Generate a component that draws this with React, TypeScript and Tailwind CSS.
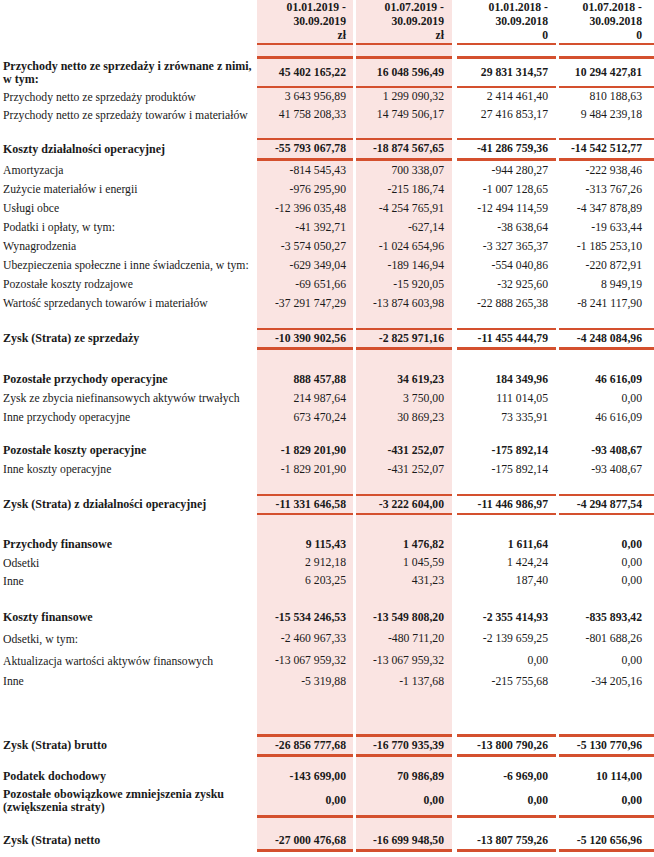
import React from "react";

type Row = {
  label?: string;
  values?: string[];
  bold?: boolean;
  h: string;
  bt?: string;
  bb?: string;
};

const rows: Row[] = [
  { h: "h-[11px]" },
  {
    label: "Przychody netto ze sprzedaży i zrównane z nimi,\nw tym:",
    values: ["45 402 165,22", "16 048 596,49", "29 831 314,57", "10 294 427,81"],
    bold: true,
    h: "h-[32px]",
    bt: "border-t-[3px]",
    bb: "border-b-2",
  },
  { label: "Przychody netto ze sprzedaży produktów", values: ["3 643 956,89", "1 299 090,32", "2 414 461,40", "810 188,63"], h: "h-[18px]" },
  { label: "Przychody netto ze sprzedaży towarów i materiałów", values: ["41 758 208,33", "14 749 506,17", "27 416 853,17", "9 484 239,18"], h: "h-[18px]" },
  { h: "h-[14px]" },
  {
    label: "Koszty działalności operacyjnej",
    values: ["-55 793 067,78", "-18 874 567,65", "-41 286 759,36", "-14 542 512,77"],
    bold: true,
    h: "h-[23px]",
    bt: "border-t-2",
    bb: "border-b-[3px]",
  },
  { label: "Amortyzacja", values: ["-814 545,43", "700 338,07", "-944 280,27", "-222 938,46"], h: "h-[19px]" },
  { label: "Zużycie materiałów i energii", values: ["-976 295,90", "-215 186,74", "-1 007 128,65", "-313 767,26"], h: "h-[19px]" },
  { label: "Usługi obce", values: ["-12 396 035,48", "-4 254 765,91", "-12 494 114,59", "-4 347 878,89"], h: "h-[19px]" },
  { label: "Podatki i opłaty, w tym:", values: ["-41 392,71", "-627,14", "-38 638,64", "-19 633,44"], h: "h-[19px]" },
  { label: "Wynagrodzenia", values: ["-3 574 050,27", "-1 024 654,96", "-3 327 365,37", "-1 185 253,10"], h: "h-[19px]" },
  { label: "Ubezpieczenia społeczne i inne świadczenia, w tym:", values: ["-629 349,04", "-189 146,94", "-554 040,86", "-220 872,91"], h: "h-[19px]" },
  { label: "Pozostałe koszty rodzajowe", values: ["-69 651,66", "-15 920,05", "-32 925,60", "8 949,19"], h: "h-[19px]" },
  { label: "Wartość sprzedanych towarów i materiałów", values: ["-37 291 747,29", "-13 874 603,98", "-22 888 265,38", "-8 241 117,90"], h: "h-[19px]" },
  { h: "h-[15px]" },
  {
    label: "Zysk (Strata) ze sprzedaży",
    values: ["-10 390 902,56", "-2 825 971,16", "-11 455 444,79", "-4 248 084,96"],
    bold: true,
    h: "h-[22px]",
    bt: "border-t-2",
    bb: "border-b-[3px]",
  },
  { h: "h-[20px]" },
  { label: "Pozostałe przychody operacyjne", values: ["888 457,88", "34 619,23", "184 349,96", "46 616,09"], bold: true, h: "h-[19px]" },
  { label: "Zysk ze zbycia niefinansowych aktywów trwałych", values: ["214 987,64", "3 750,00", "111 014,05", "0,00"], h: "h-[19px]" },
  { label: "Inne przychody operacyjne", values: ["673 470,24", "30 869,23", "73 335,91", "46 616,09"], h: "h-[19px]" },
  { h: "h-[14px]" },
  { label: "Pozostałe koszty operacyjne", values: ["-1 829 201,90", "-431 252,07", "-175 892,14", "-93 408,67"], bold: true, h: "h-[19px]" },
  { label: "Inne koszty operacyjne", values: ["-1 829 201,90", "-431 252,07", "-175 892,14", "-93 408,67"], h: "h-[19px]" },
  { h: "h-[15px]" },
  {
    label: "Zysk (Strata) z działalności operacyjnej",
    values: ["-11 331 646,58", "-3 222 604,00", "-11 446 986,97", "-4 294 877,54"],
    bold: true,
    h: "h-[21px]",
    bt: "border-t-2",
    bb: "border-b-2",
  },
  { h: "h-[20px]" },
  { label: "Przychody finansowe", values: ["9 115,43", "1 476,82", "1 611,64", "0,00"], bold: true, h: "h-[19px]" },
  { label: "Odsetki", values: ["2 912,18", "1 045,59", "1 424,24", "0,00"], h: "h-[18px]" },
  { label: "Inne", values: ["6 203,25", "431,23", "187,40", "0,00"], h: "h-[18px]" },
  { h: "h-[17px]" },
  { label: "Koszty finansowe", values: ["-15 534 246,53", "-13 549 808,20", "-2 355 414,93", "-835 893,42"], bold: true, h: "h-[21px]" },
  { label: "Odsetki, w tym:", values: ["-2 460 967,33", "-480 711,20", "-2 139 659,25", "-801 688,26"], h: "h-[22px]" },
  { label: "Aktualizacja wartości aktywów finansowych", values: ["-13 067 959,32", "-13 067 959,32", "0,00", "0,00"], h: "h-[22px]" },
  { label: "Inne", values: ["-5 319,88", "-1 137,68", "-215 755,68", "-34 205,16"], h: "h-[19px]" },
  { h: "h-[43px]" },
  {
    label: "Zysk (Strata) brutto",
    values: ["-26 856 777,68", "-16 770 935,39", "-13 800 790,26", "-5 130 770,96"],
    bold: true,
    h: "h-[23px]",
    bt: "border-t-[3px]",
    bb: "border-b-[3px]",
  },
  { h: "h-[10px]" },
  { label: "Podatek dochodowy", values: ["-143 699,00", "70 986,89", "-6 969,00", "10 114,00"], bold: true, h: "h-[19px]" },
  {
    label: "Pozostałe obowiązkowe zmniejszenia zysku\n(zwiększenia straty)",
    values: ["0,00", "0,00", "0,00", "0,00"],
    bold: true,
    h: "h-[32px]",
    bb: "border-b-[3px]",
  },
  { h: "h-[14px]" },
  {
    label: "Zysk (Strata) netto",
    values: ["-27 000 476,68", "-16 699 948,50", "-13 807 759,26", "-5 120 656,96"],
    bold: true,
    h: "h-[20px]",
    bb: "border-b-[3px]",
  },
];

const wrap = ["w-[96px]", "w-[99px] pl-[3px]", "w-[104px] pl-[5px]", "w-[98px] pl-[3px]"];
const pad = ["pr-[7px]", "pr-[8px]", "pr-[8px]", "pr-[12px]"];
const fill = ["bg-[#fae4e2]", "bg-[#fae4e2]", "", ""];

function TableRow({ row }: { row: Row }) {
  const { label, values, bold, h, bt = "", bb = "" } = row;
  return (
    <div className={`flex ${h} ${bold ? "font-bold" : ""}`}>
      <div
        className={`w-[257px] shrink-0 flex items-center pl-[3px] leading-[13px] whitespace-pre overflow-hidden border-transparent ${
          bold ? "text-[12px]" : ""
        } ${bt} ${bb}`}
      >
        {label}
      </div>
      {[0, 1, 2, 3].map((i) => (
        <div key={i} className={`${wrap[i]} shrink-0 h-full`}>
          <div
            className={`h-full flex items-center justify-end whitespace-nowrap border-[#d4502e] ${fill[i]} ${pad[i]} ${bt} ${bb}`}
          >
            {values ? values[i] : ""}
          </div>
        </div>
      ))}
    </div>
  );
}

function Header() {
  const heads = [
    ["01.01.2019 -", "30.09.2019", "zł"],
    ["01.07.2019 -", "30.09.2019", "zł"],
    ["01.01.2018 -", "30.09.2018", "0"],
    ["01.07.2018 -", "30.09.2018", "0"],
  ];
  return (
    <div className="flex h-[45px] font-bold">
      <div className="w-[257px] shrink-0" />
      {heads.map((lines, i) => (
        <div key={i} className={`${wrap[i]} shrink-0 h-full`}>
          <div
            className={`h-full flex flex-col items-end pt-px leading-[14px] border-b-2 border-[#d4502e] ${fill[i]} ${pad[i]}`}
          >
            {lines.map((l) => (
              <span key={l}>{l}</span>
            ))}
          </div>
        </div>
      ))}
    </div>
  );
}

export default function App() {
  return (
    <div className="w-[654px] h-[857px] bg-white text-[#1a1a1a] text-[11.7px] [font-family:'Liberation_Serif',serif]">
      <Header />
      {rows.map((row, i) => (
        <TableRow key={i} row={row} />
      ))}
    </div>
  );
}
